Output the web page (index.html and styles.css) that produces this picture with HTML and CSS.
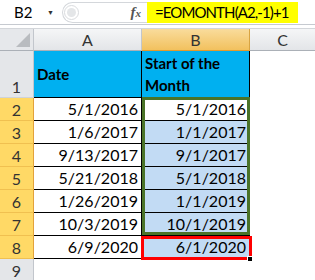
FILE: index.html
```html
<!DOCTYPE html>
<html lang="en">
<head>
    <meta charset="UTF-8">
    <title>EOMONTH</title>
    <link rel="stylesheet" href="styles.css">
</head>
<body>
    <div class="formula-bar">
        <div class="name-box">
            <span>B2</span>
            <span class="drop">&#9660;</span>
        </div>
        <div class="fx-box">
            <span class="knob"><span class="knob-in"></span></span>
            <span class="fx">f<small>x</small></span>
        </div>
        <div class="formula">=EOMONTH(A2,-1)+1</div>
    </div>
    <div class="strip"></div>

    <div class="sheet">
        <div class="corner"><span class="tri"></span></div>
        <div class="col-head">A</div>
        <div class="col-head active">B</div>
        <div class="col-head last">C</div>

        <div class="row-head tall">1</div>
        <div class="cell title">Date</div>
        <div class="cell title">Start of the<br>Month</div>
        <div class="blank"></div>

        <div class="row-head sel">2</div>
        <div class="cell">5/1/2016</div>
        <div class="cell">5/1/2016</div>
        <div class="blank"></div>

        <div class="row-head sel">3</div>
        <div class="cell">1/6/2017</div>
        <div class="cell blue">1/1/2017</div>
        <div class="blank"></div>

        <div class="row-head sel">4</div>
        <div class="cell">9/13/2017</div>
        <div class="cell blue">9/1/2017</div>
        <div class="blank"></div>

        <div class="row-head sel">5</div>
        <div class="cell">5/21/2018</div>
        <div class="cell blue">5/1/2018</div>
        <div class="blank"></div>

        <div class="row-head sel">6</div>
        <div class="cell">1/26/2019</div>
        <div class="cell blue">1/1/2019</div>
        <div class="blank"></div>

        <div class="row-head sel">7</div>
        <div class="cell">10/3/2019</div>
        <div class="cell blue">10/1/2019</div>
        <div class="blank"></div>

        <div class="row-head sel">8</div>
        <div class="cell">6/9/2020</div>
        <div class="cell blue">6/1/2020</div>
        <div class="blank"></div>

        <div class="row-head">9</div>
        <div class="blank"></div>
        <div class="blank"></div>
        <div class="blank"></div>

        <div class="green-box"></div>
        <div class="red-box"><span class="handle"></span></div>
    </div>
</body>
</html>
```

FILE: styles.css
```css
body {
    margin: 0;
    width: 315px;
    height: 280px;
    overflow: hidden;
    background: #fff;
    font-family: Lato, "Liberation Sans", sans-serif;
    color: #000;
}
.formula-bar {
    display: flex;
    align-items: center;
    height: 25px;
    background: #fff;
    border-bottom: 1px solid #c6cad0;
    box-sizing: border-box;
}
.name-box {
    width: 62px;
    display: flex;
    align-items: center;
    justify-content: space-between;
    padding: 0 8px 0 14px;
    box-sizing: border-box;
    font-size: 15px;
}
.drop {
    font-size: 7px;
    color: #333;
}
.fx-box {
    width: 85px;
    height: 21px;
    box-sizing: border-box;
    border: 1px solid #d4d7db;
    border-right: none;
    border-radius: 11px 0 0 11px;
    display: flex;
    align-items: center;
    justify-content: space-between;
    padding: 0 6px 0 1px;
}
.knob {
    width: 15px;
    height: 15px;
    border-radius: 50%;
    border: 1px solid #d9dbde;
    box-sizing: border-box;
    display: flex;
    align-items: center;
    justify-content: center;
}
.knob-in {
    width: 9px;
    height: 9px;
    border-radius: 50%;
    background: #e4e6e8;
}
.fx {
    font-family: "Liberation Serif", serif;
    font-style: italic;
    font-weight: bold;
    font-size: 15px;
    color: #555;
}
.fx small {
    font-size: 11px;
}
.formula {
    width: 151px;
    height: 21px;
    background: #ffff00;
    font-size: 15px;
    letter-spacing: -0.9px;
    line-height: 21px;
    padding-left: 8px;
    box-sizing: border-box;
    white-space: nowrap;
}
.strip {
    height: 3px;
    background: #fff;
    border-bottom: 1px solid #d3d6da;
}
.sheet {
    position: relative;
    display: grid;
    grid-template-columns: 34px 108px 108px 65px;
    grid-template-rows: 22px 47px repeat(8, 23px);
}
.corner {
    position: relative;
    background: #e6e8eb;
    border-right: 1px solid #c2c6cc;
    border-bottom: 1px solid #abb0b7;
}
.tri {
    position: absolute;
    right: 3px;
    bottom: 3px;
    width: 0;
    height: 0;
    border-left: 14px solid transparent;
    border-bottom: 14px solid #b9bcc0;
}
.col-head {
    background: linear-gradient(#f5f6f7, #e3e5e8);
    border-right: 1px solid #c2c6cc;
    border-bottom: 1px solid #abb0b7;
    text-align: center;
    font-size: 16px;
    line-height: 21px;
    color: #333;
}
.col-head.active {
    background: linear-gradient(#f9dc9c, #f2c15e);
    border-right-color: #d9a441;
    border-bottom-color: #e29a2c;
}
.col-head.last {
    border-right: none;
}
.row-head {
    background: #e4e6e9;
    border-right: 1px solid #c2c6cc;
    border-bottom: 1px solid #cfd3d8;
    text-align: center;
    font-size: 16px;
    line-height: 23px;
    color: #333;
}
.row-head.tall {
    line-height: 20px;
    display: flex;
    align-items: flex-end;
    justify-content: center;
}
.row-head.sel {
    background: #ffd966;
    border-right-color: #e2a23b;
    border-bottom-color: #f0c050;
}
.cell {
    border-right: 1px solid #000;
    border-bottom: 1px solid #000;
    font-size: 16px;
    line-height: 22px;
    text-align: right;
    padding-right: 3px;
    box-sizing: border-box;
    white-space: nowrap;
}
.cell.title {
    background: #00b0f0;
    font-weight: bold;
    font-size: 15px;
    text-align: left;
    padding-left: 3px;
    display: flex;
    align-items: center;
}
.cell.blue {
    background: #c2dbf4;
}
.blank {
    background: #fff;
}
.green-box {
    position: absolute;
    left: 142px;
    top: 68px;
    width: 108px;
    height: 138px;
    border: 3px solid #4a7328;
    box-sizing: border-box;
}
.red-box {
    position: absolute;
    left: 141px;
    top: 207px;
    width: 111px;
    height: 24px;
    border: 3px solid #ff0000;
    box-sizing: border-box;
}
.handle {
    position: absolute;
    right: -4px;
    bottom: -5px;
    width: 4px;
    height: 4px;
    background: #000;
    border: 1px solid #fff;
}
```
